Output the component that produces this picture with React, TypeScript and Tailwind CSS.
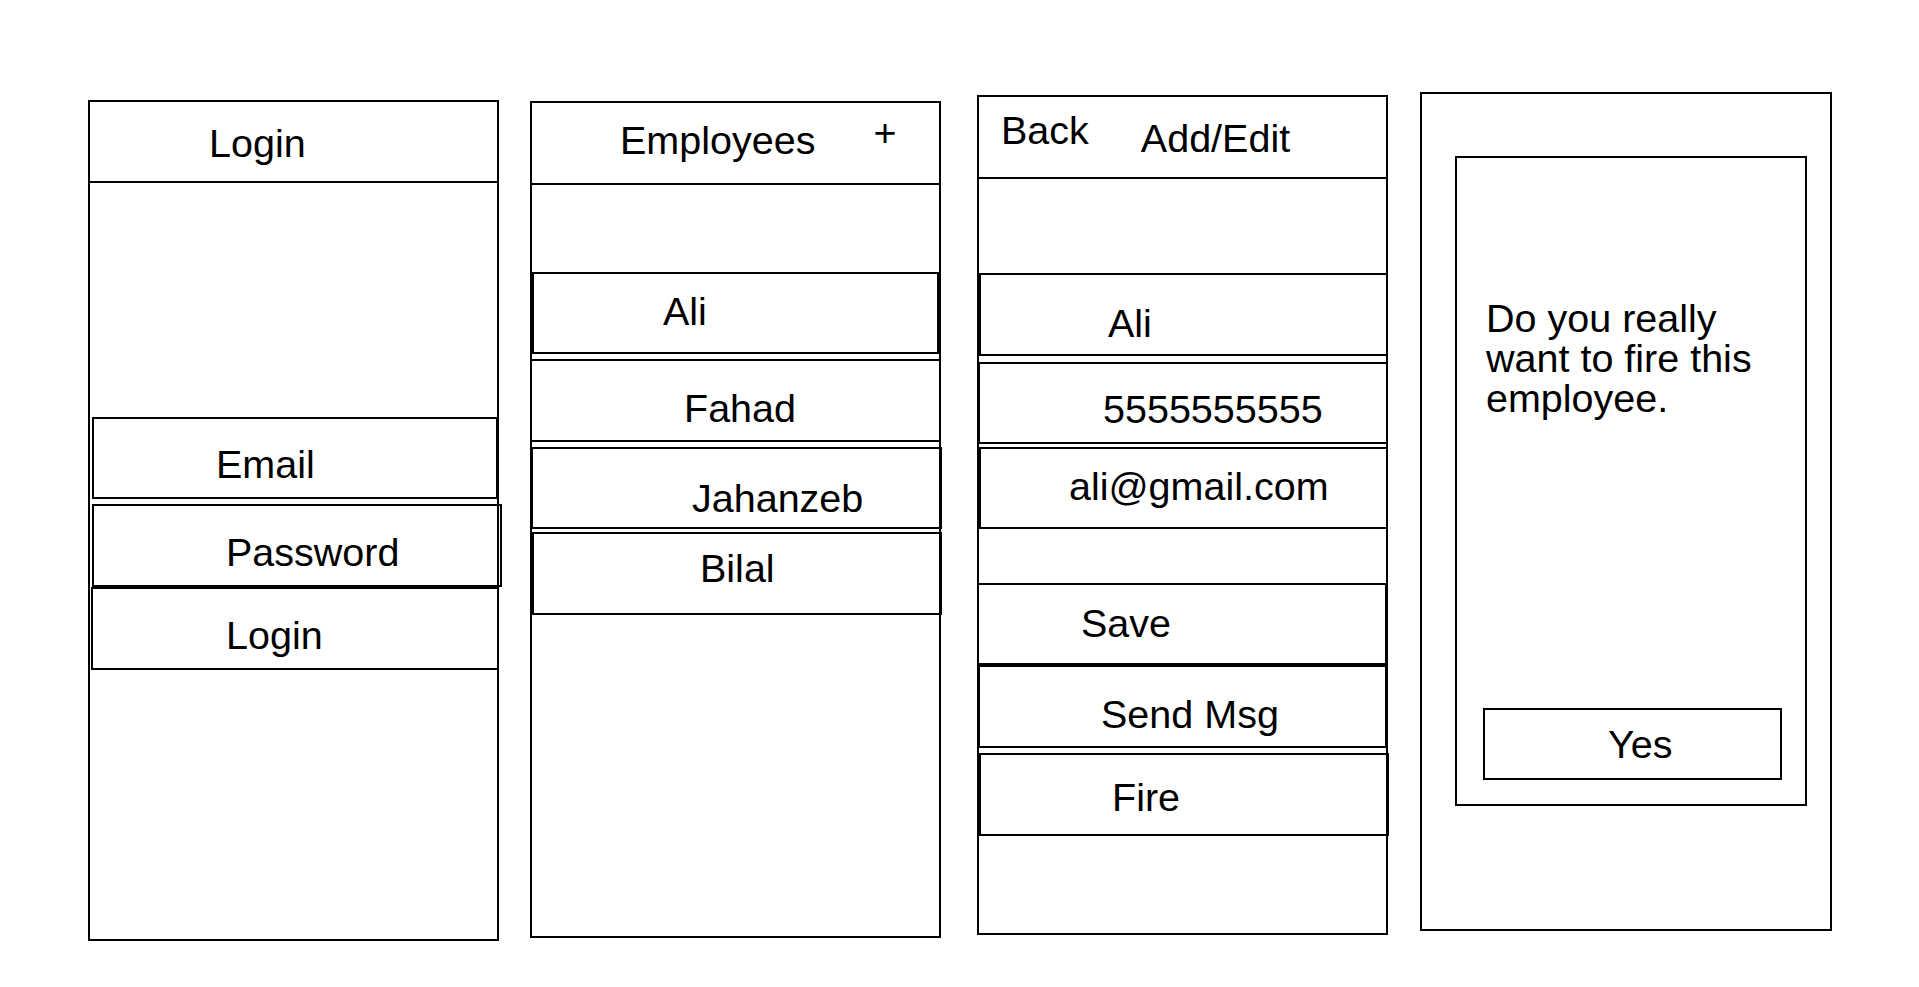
export default function App() {
  return (
    <div className="min-h-screen w-full bg-white font-['Liberation_Sans',Arial,sans-serif] text-black text-[39.5px] leading-none">
      <div className="flex items-start pl-[88px]">
        {/* Login screen */}
        <div className="mt-[100px] w-[411px] h-[841px] border-2 border-black flex flex-col items-start">
          <div className="w-full h-[81px] border-b-2 border-black pt-[22px] pl-[119px]">Login</div>
          <div className="mt-[234px] ml-[2px] w-[406px] h-[82px] border-2 border-black pt-[26px] pl-[122px]">Email</div>
          <div className="mt-[5px] ml-[2px] w-[410px] h-[83px] border-2 border-black pt-[27px] pl-[132px]">Password</div>
          <div className="ml-[1px] w-[408px] h-[83px] border-2 border-black pt-[27px] pl-[133px]">Login</div>
        </div>

        {/* Employees list */}
        <div className="ml-[31px] mt-[101px] w-[411px] h-[837px] border-2 border-black flex flex-col items-start">
          <div className="w-full h-[82px] border-b-2 border-black flex items-start pl-[88px]">
            <span className="mt-[18px]">Employees</span>
            <span className="mt-[10px] ml-[58px]">+</span>
          </div>
          <div className="mt-[87px] w-[407px] h-[82px] border-2 border-black pt-[18px] pl-[129px]">Ali</div>
          <div className="mt-[5px] ml-[-2px] w-[411px] h-[83px] border-2 border-black pt-[28px] pl-[152px]">Fahad</div>
          <div className="mt-[5px] ml-[-1px] w-[411px] h-[82px] border-2 border-black pt-[30px] pl-[159px]">Jahanzeb</div>
          <div className="mt-[3px] w-[410px] h-[83px] border-2 border-black pt-[15px] pl-[166px]">Bilal</div>
        </div>

        {/* Add / Edit */}
        <div className="ml-[36px] mt-[95px] w-[411px] h-[840px] border-2 border-black flex flex-col items-start">
          <div className="w-full h-[82px] border-b-2 border-black flex items-start pl-[22px]">
            <span className="mt-[14px]">Back</span>
            <span className="mt-[22px] ml-[52px]">Add/Edit</span>
          </div>
          <div className="mt-[94px] w-[409px] h-[83px] border-2 border-black pt-[29px] pl-[127px]">Ali</div>
          <div className="mt-[6px] ml-[-1px] w-[410px] h-[82px] border-2 border-black pt-[26px] pl-[123px]">5555555555</div>
          <div className="mt-[3px] w-[409px] h-[82px] border-2 border-black pt-[18px] pl-[88px]">ali@gmail.com</div>
          <div className="mt-[54px] ml-[-2px] w-[410px] h-[82px] border-2 border-black pt-[19px] pl-[102px]">Save</div>
          <div className="ml-[-1px] w-[409px] h-[83px] border-2 border-black pt-[28px] pl-[121px]">Send Msg</div>
          <div className="mt-[5px] w-[410px] h-[83px] border-2 border-black pt-[23px] pl-[131px]">Fire</div>
        </div>

        {/* Fire confirmation dialog */}
        <div className="ml-[32px] mt-[92px] w-[412px] h-[839px] border-2 border-black">
          <div className="ml-[33px] mt-[62px] w-[352px] h-[650px] border-2 border-black flex flex-col items-start">
            <p className="mt-[140px] ml-[29px] leading-[40px]">
              Do you really
              <br />
              want to fire this
              <br />
              employee.
            </p>
            <div className="mt-[290px] ml-[26px] w-[299px] h-[72px] border-2 border-black pt-[15px] pl-[123px]">Yes</div>
          </div>
        </div>
      </div>
    </div>
  );
}
